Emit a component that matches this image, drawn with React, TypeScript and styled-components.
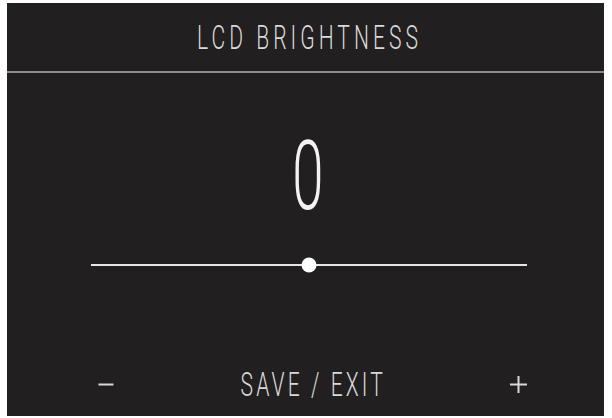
import React from "react";
import styled, { createGlobalStyle } from "styled-components";

const Global = createGlobalStyle`
  html, body { margin: 0; padding: 0; background: #ffffff; }
  body { width: 612px; height: 418px; overflow: hidden; font-family: "Roboto", "Liberation Sans", sans-serif; }
`;

const Page = styled.div`
  width: 612px;
  height: 418px;
  padding: 3px 8px 2px 7px;
  box-sizing: border-box;
`;

const Panel = styled.div`
  width: 100%;
  height: 100%;
  background: #221f20;
  display: flex;
  flex-direction: column;
`;

const Header = styled.div`
  height: 68px;
  display: flex;
  align-items: center;
  justify-content: center;
  padding-left: 8px;
`;

const Condensed = styled.span<{ $size: number; $spacing: number; $scale: number; $weight?: number }>`
  display: inline-block;
  font-size: ${(p) => p.$size}px;
  font-weight: ${(p) => p.$weight ?? 300};
  letter-spacing: ${(p) => p.$spacing}px;
  color: #d9d9d9;
  transform: scaleX(${(p) => p.$scale});
  transform-origin: center;
  white-space: pre;
  line-height: 1;
`;

const Divider = styled.div`
  height: 2px;
  background: #8d8b8c;
`;

const Main = styled.div`
  flex: 1;
  display: flex;
  flex-direction: column;
  align-items: stretch;
  padding-top: 63px;
  box-sizing: border-box;
`;

const Value = styled.div`
  height: 80px;
  display: flex;
  align-items: center;
  justify-content: center;
  padding-left: 4px;
`;

const Digit = styled.span`
  display: inline-block;
  font-size: 97px;
  font-weight: 300;
  color: #f2f2f2;
  transform: scaleX(0.58);
  line-height: 1;
`;

const SliderRow = styled.div`
  margin-top: 41px;
  height: 16px;
  padding: 0 77px 0 84px;
  display: flex;
  align-items: center;
`;

const Track = styled.div`
  position: relative;
  flex: 1;
  height: 2px;
  background: #e6e6e6;
`;

const Thumb = styled.div`
  position: absolute;
  left: 50%;
  top: 50%;
  width: 15px;
  height: 15px;
  border-radius: 50%;
  background: #ffffff;
  transform: translate(-50%, -50%);
`;

const Footer = styled.div`
  height: 64px;
  display: flex;
  align-items: center;
  padding: 0 77px 0 90px;
`;

const Label = styled.div`
  flex: 1;
  display: flex;
  justify-content: center;
  padding-left: 3px;
`;

const IconBox = styled.div`
  width: 17px;
  height: 17px;
  display: flex;
  align-items: center;
  justify-content: center;
`;

export default function App() {
  return (
    <>
      <Global />
      <Page>
        <Panel>
          <Header>
            <Condensed $size={34} $spacing={6.5} $scale={0.62}>LCD BRIGHTNESS</Condensed>
          </Header>
          <Divider />
          <Main>
            <Value>
              <Digit>0</Digit>
            </Value>
            <SliderRow>
              <Track>
                <Thumb />
              </Track>
            </SliderRow>
          </Main>
          <Footer>
            <IconBox>
              <svg width="16" height="17" viewBox="0 0 16 17">
                <line x1="0.5" y1="8.5" x2="15.5" y2="8.5" stroke="#d9d9d9" strokeWidth="2" />
              </svg>
            </IconBox>
            <Label>
              <Condensed $size={34} $spacing={5} $scale={0.62}>SAVE / EXIT</Condensed>
            </Label>
            <IconBox>
              <svg width="17" height="17" viewBox="0 0 17 17">
                <line x1="0" y1="8.5" x2="17" y2="8.5" stroke="#d9d9d9" strokeWidth="2" />
                <line x1="8.5" y1="0" x2="8.5" y2="17" stroke="#d9d9d9" strokeWidth="2" />
              </svg>
            </IconBox>
          </Footer>
        </Panel>
      </Page>
    </>
  );
}
